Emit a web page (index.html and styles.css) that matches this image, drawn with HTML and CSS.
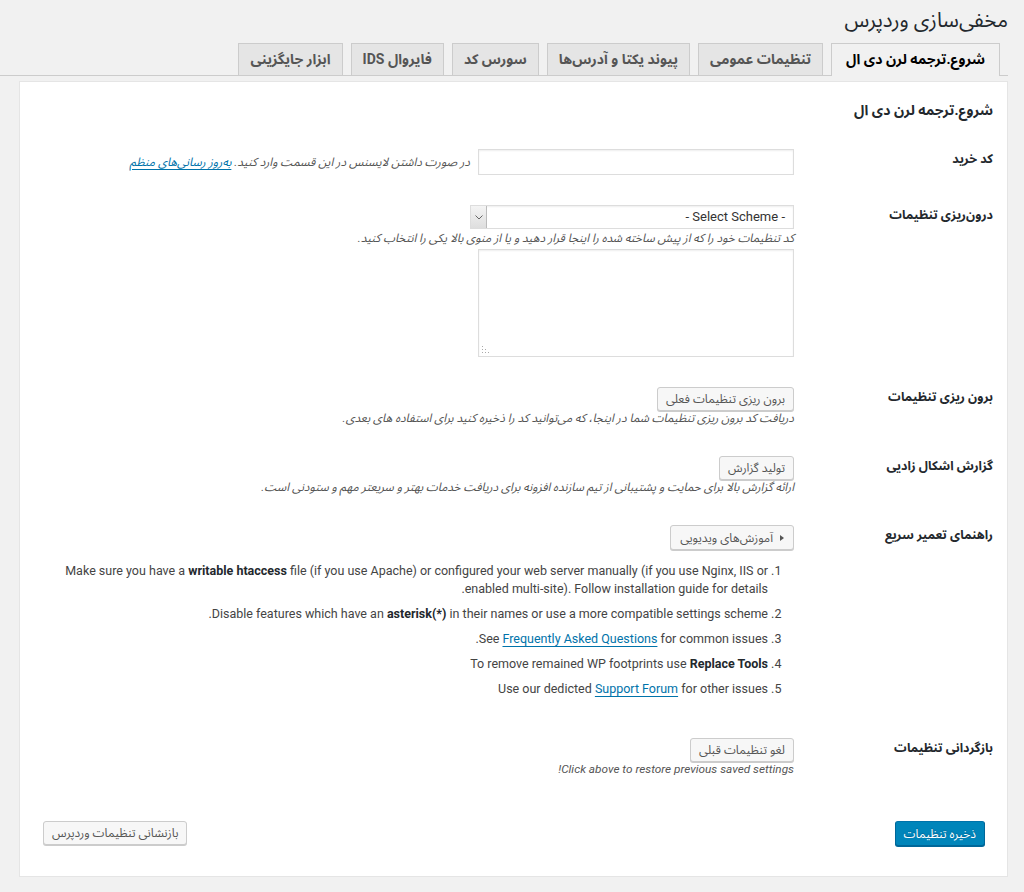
FILE: index.html
```html
<!DOCTYPE html>
<html lang="fa" dir="rtl">
<head>
    <meta charset="UTF-8">
    <meta name="viewport" content="width=device-width, initial-scale=1.0">
    <title>مخفی‌سازی وردپرس</title>
    <link rel="stylesheet" href="styles.css">
</head>
<body>
    <div class="wrap">
        <h1 class="page-title">مخفی‌سازی وردپرس</h1>

        <nav class="nav-tabs">
            <a href="#" class="nav-tab nav-tab-active">شروع.ترجمه لرن دی ال</a>
            <a href="#" class="nav-tab">تنظیمات عمومی</a>
            <a href="#" class="nav-tab">پیوند یکتا و آدرس‌ها</a>
            <a href="#" class="nav-tab">سورس کد</a>
            <a href="#" class="nav-tab">فایروال IDS</a>
            <a href="#" class="nav-tab">ابزار جایگزینی</a>
        </nav>

        <div class="panel">
            <h2 class="panel-title">شروع.ترجمه لرن دی ال</h2>

            <div class="form-row">
                <div class="form-label">کد خرید</div>
                <div class="form-field">
                    <div class="inline-field">
                        <input type="text" class="text-input">
                        <span class="description">در صورت داشتن لایسنس در این قسمت وارد کنید. <a href="#">به‌روز رسانی‌های منظم</a></span>
                    </div>
                </div>
            </div>

            <div class="form-row">
                <div class="form-label">درون‌ریزی تنظیمات</div>
                <div class="form-field">
                    <div class="select-box">
                        <span class="select-text">- Select Scheme -</span>
                        <span class="select-arrow">
                            <svg width="8" height="5" viewBox="0 0 8 5"><polyline points="0.5,0.5 4,4 7.5,0.5" fill="none" stroke="#666" stroke-width="1"/></svg>
                        </span>
                    </div>
                    <p class="description">کد تنظیمات خود را که از پیش ساخته شده را اینجا قرار دهید و یا از منوی بالا یکی را انتخاب کنید.</p>
                    <div class="textarea-wrap">
                        <textarea class="text-area"></textarea>
                        <svg class="textarea-grip" width="7" height="7" viewBox="0 0 7 7">
                            <rect x="0" y="0" width="1" height="1" fill="#aaa"/>
                            <rect x="0" y="3" width="1" height="1" fill="#aaa"/>
                            <rect x="0" y="6" width="1" height="1" fill="#aaa"/>
                            <rect x="3" y="3" width="1" height="1" fill="#aaa"/>
                            <rect x="3" y="6" width="1" height="1" fill="#aaa"/>
                            <rect x="6" y="6" width="1" height="1" fill="#aaa"/>
                        </svg>
                    </div>
                </div>
            </div>

            <div class="form-row">
                <div class="form-label">برون ریزی تنظیمات</div>
                <div class="form-field">
                    <button type="button" class="button">برون ریزی تنظیمات فعلی</button>
                    <p class="description">دریافت کد برون ریزی تنظیمات شما در اینجا، که می‌توانید کد را ذخیره کنید برای استفاده های بعدی.</p>
                </div>
            </div>

            <div class="form-row">
                <div class="form-label">گزارش اشکال زادیی</div>
                <div class="form-field">
                    <button type="button" class="button">تولید گزارش</button>
                    <p class="description">ارائه گزارش بالا برای حمایت و پشتیبانی از تیم سازنده افزونه برای دریافت خدمات بهتر و سریعتر مهم و ستودنی است.</p>
                </div>
            </div>

            <div class="form-row">
                <div class="form-label">راهنمای تعمیر سریع</div>
                <div class="form-field">
                    <button type="button" class="button button-video">
                        <svg width="4" height="6" viewBox="0 0 4 6"><polygon points="0,0 4,3 0,6" fill="#555"/></svg>
                        آموزش‌های ویدیویی
                    </button>
                    <ol class="help-list">
                        <li>Make sure you have a <b>writable htaccess</b> file (if you use Apache) or configured your web server manually (if you use Nginx, IIS or enabled multi-site). Follow installation guide for details.</li>
                        <li>Disable features which have an <b>asterisk(*)</b> in their names or use a more compatible settings scheme.</li>
                        <li>See <a href="#">Frequently Asked Questions</a> for common issues.</li>
                        <li>To remove remained WP footprints use <b>Replace Tools</b></li>
                        <li>Use our dedicted <a href="#">Support Forum</a> for other issues</li>
                    </ol>
                </div>
            </div>

            <div class="form-row">
                <div class="form-label">بازگردانی تنظیمات</div>
                <div class="form-field">
                    <button type="button" class="button">لغو تنظیمات قبلی</button>
                    <p class="description">Click above to restore previous saved settings!</p>
                </div>
            </div>

            <div class="form-actions">
                <button type="button" class="button button-primary">ذخیره تنظیمات</button>
                <button type="button" class="button">بازنشانی تنظیمات وردپرس</button>
            </div>
        </div>
    </div>
</body>
</html>
```

FILE: styles.css
```css
body {
    margin: 0;
    background-color: #f1f1f1;
    color: #444;
    font-family: Roboto, "Noto Sans Arabic", "Noto Naskh Arabic", "DejaVu Sans", sans-serif;
    font-size: 13px;
    direction: rtl;
}
.wrap {
    padding-right: 16px;
    padding-bottom: 15px;
}
.page-title {
    margin: 0;
    padding-top: 6px;
    font-size: 20.5px;
    font-weight: normal;
    line-height: 29px;
    color: #23282d;
}
.nav-tabs {
    display: flex;
    align-items: flex-end;
    gap: 8px;
    margin-top: 8px;
    padding-right: 8px;
    border-bottom: 1px solid #ccc;
}
.nav-tab {
    display: block;
    height: 31px;
    padding: 0 11px;
    border: 1px solid #ccc;
    border-bottom: none;
    background: #e5e5e5;
    color: #555;
    font-size: 14px;
    font-weight: bold;
    line-height: 30px;
    text-decoration: none;
    white-space: nowrap;
}
.nav-tab-active {
    background: #f1f1f1;
    color: #000;
    height: 32px;
    margin-bottom: -1px;
    padding: 0 14px;
}
.panel {
    margin: 5px 0 0 19px;
    padding: 0 14px 30px;
    background: #fff;
    border: 1px solid #e5e5e5;
}
.panel-title {
    margin: 19px 0 0;
    font-size: 14px;
    font-weight: bold;
    line-height: 18px;
    color: #23282d;
}
.form-row {
    display: flex;
    margin-top: 30px;
}
.form-label {
    width: 199px;
    flex-shrink: 0;
    font-size: 12.5px;
    font-weight: bold;
    line-height: 20px;
    color: #23282d;
}
.form-field {
    flex: 1;
    min-width: 0;
}
.inline-field {
    display: flex;
    align-items: center;
    gap: 8px;
}
.text-input {
    width: 316px;
    height: 26px;
    box-sizing: border-box;
    border: 1px solid #ddd;
    box-shadow: inset 0 1px 2px rgba(0,0,0,0.07);
    font-family: inherit;
    margin: 0;
}
.description {
    margin: 0;
    font-size: 11.8px;
    font-style: italic;
    line-height: 15px;
    color: #555;
}
.select-box + .description {
    margin-top: 2px;
}
.description a, .help-list a {
    color: #0073aa;
    text-decoration: underline;
    text-underline-offset: 3px;
}
.select-box {
    display: flex;
    width: 324px;
    height: 24px;
    box-sizing: border-box;
    border: 1px solid #ddd;
    background: #fff;
    box-shadow: inset 0 1px 2px rgba(0,0,0,0.07);
}
.select-text {
    flex: 1;
    padding-right: 8px;
    line-height: 22px;
    color: #333;
}
.select-arrow {
    display: flex;
    align-items: center;
    justify-content: center;
    width: 15px;
    background: linear-gradient(#f4f4f4, #dedede);
    border-right: 1px solid #bbb;
}
.textarea-wrap {
    position: relative;
    width: 316px;
    margin-top: 3px;
}
.text-area {
    display: block;
    width: 316px;
    height: 108px;
    box-sizing: border-box;
    border: 1px solid #ddd;
    box-shadow: inset 0 1px 2px rgba(0,0,0,0.07);
    font-family: inherit;
    resize: none;
}
.textarea-grip {
    position: absolute;
    left: 4px;
    bottom: 4px;
}
.button {
    height: 24px;
    padding: 0 8px;
    border: 1px solid #ccc;
    border-radius: 3px;
    background: #f7f7f7;
    box-shadow: 0 1px 0 #ccc;
    color: #555;
    font-family: inherit;
    font-size: 12px;
    line-height: 22px;
    cursor: pointer;
    white-space: nowrap;
}
.button-video {
    height: 25px;
    display: inline-flex;
    align-items: center;
    gap: 7px;
    padding: 0 9px;
}
.button-primary {
    height: 25px;
    background: #0085ba;
    border-color: #0073aa #006799 #006799;
    box-shadow: 0 1px 0 #006799;
    color: #fff;
    text-shadow: 0 -1px 1px #006799;
}
.help-list {
    margin: 12px 0 10px;
    padding-right: 26px;
    font-size: 12.5px;
    line-height: 18px;
    color: #444;
}
.help-list li {
    margin-bottom: 7px;
}
.help-list b {
    color: #23282d;
}
.form-actions {
    display: flex;
    justify-content: space-between;
    margin-top: 44px;
    padding: 0 8px 0 9px;
}
```
